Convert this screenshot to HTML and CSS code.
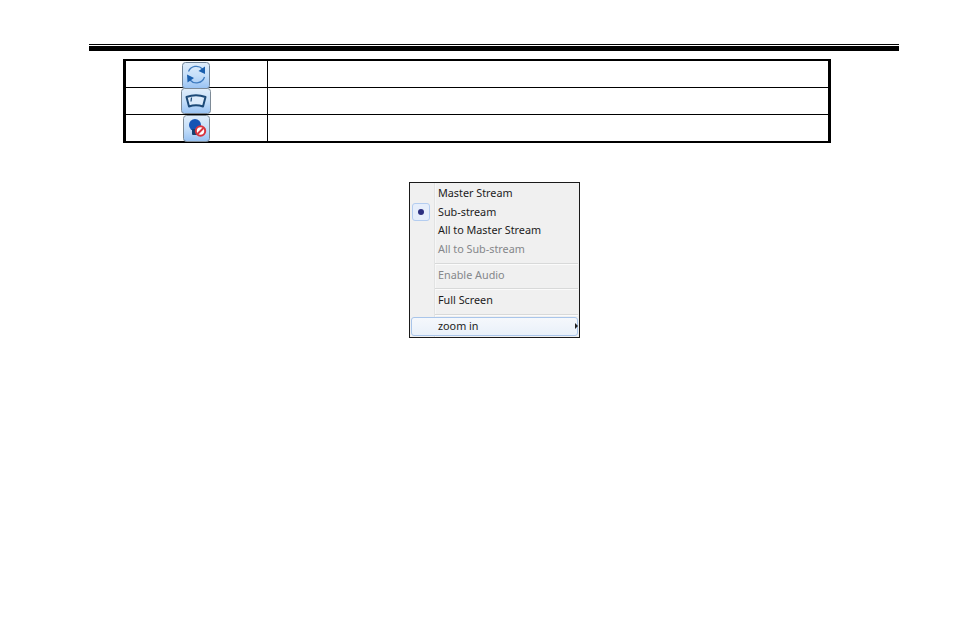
FILE: index.html
```html
<!DOCTYPE html>
<html lang="en">
<head>
    <meta charset="UTF-8">
    <title>Manual page</title>
    <link rel="stylesheet" href="styles.css">
</head>
<body>
    <div class="page">
        <div class="rule-thin"></div>
        <div class="rule-thick"></div>

        <table class="icon-table">
            <tr>
                <td class="icon-cell">
                    <svg class="tool-btn btn-a" viewBox="0 0 28 27">
                        <defs>
                            <linearGradient id="btnBg" x1="0" y1="0" x2="0" y2="1">
                                <stop offset="0" stop-color="#dfedfb"/>
                                <stop offset="0.5" stop-color="#c6dff9"/>
                                <stop offset="1" stop-color="#98c2f3"/>
                            </linearGradient>
                        </defs>
                        <rect x="0.5" y="0.5" width="27" height="26" rx="3" fill="url(#btnBg)" stroke="#6f8296"/>
                        <path d="M6.500 9.500a8.500 8.500 0 0 1 14-2.500" fill="none" stroke="#3f7cc0" stroke-width="1.300"/>
                        <path d="M23 4.500l0 7.500-6.500-3z" fill="#1a5fae"/>
                        <path d="M22.500 15a8.500 8.500 0 0 1-14.500 3" fill="none" stroke="#3f7cc0" stroke-width="1.300"/>
                        <path d="M5.500 20.500l-0.500-8 7 3.500z" fill="#1a5fae"/>
                    </svg>
                </td>
                <td></td>
            </tr>
            <tr>
                <td class="icon-cell">
                    <svg class="tool-btn btn-b" viewBox="0 0 30 26">
                        <rect x="0.5" y="0.5" width="29" height="25" rx="3" fill="url(#btnBg)" stroke="#7d8a96"/>
                        <path d="M5.500 9q9.500-3.500 19 0l-2.500 9.500q-7-2.500-14 0z" fill="#dcebfb" stroke="#1c4a78" stroke-width="2" stroke-linejoin="round"/>
                        <path d="M10.500 9.500l-0.500 4" stroke="#1c4a78" stroke-width="1.200"/>
                    </svg>
                </td>
                <td></td>
            </tr>
            <tr>
                <td class="icon-cell">
                    <svg class="tool-btn btn-c" viewBox="0 0 27 27">
                        <rect x="0.5" y="0.5" width="26" height="26" rx="3" fill="url(#btnBg)" stroke="#7d8a96"/>
                        <circle cx="12" cy="10" r="6" fill="#1554b4"/>
                        <rect x="9" y="14" width="6" height="6" rx="1" fill="#17406f"/>
                        <circle cx="17.500" cy="16" r="4.700" fill="#fff" stroke="#d8343f" stroke-width="2"/>
                        <path d="M14.500 19l6-6" stroke="#d8343f" stroke-width="2"/>
                    </svg>
                </td>
                <td></td>
            </tr>
        </table>

        <div class="context-menu">
            <div class="menu-item">Master Stream</div>
            <div class="menu-item checked">
                <span class="check-box"><span class="check-dot"></span></span>
                Sub-stream
            </div>
            <div class="menu-item">All to Master Stream</div>
            <div class="menu-item disabled">All to Sub-stream</div>
            <div class="menu-sep"></div>
            <div class="menu-item disabled">Enable Audio</div>
            <div class="menu-sep"></div>
            <div class="menu-item">Full Screen</div>
            <div class="menu-sep"></div>
            <div class="menu-item hover">
                zoom in
                <span class="submenu-arrow"></span>
            </div>
        </div>
    </div>
</body>
</html>
```

FILE: styles.css
```css
body {
    margin: 0;
    background: white;
    font-family: 'Noto Sans', 'Liberation Sans', sans-serif;
}

.page {
    padding: 44px 56px 0 89px;
}

.rule-thin {
    width: 810px;
    height: 1px;
    background: black;
}

.rule-thick {
    width: 810px;
    height: 5px;
    margin-top: 1px;
    background: black;
}

.icon-table {
    box-sizing: border-box;
    width: 708px;
    height: 84px;
    margin: 8px 0 0 34px;
    border-collapse: separate;
    border-spacing: 0;
    border-style: solid;
    border-color: black;
    border-width: 2px 3px;
    table-layout: fixed;
}

.icon-table td {
    height: 26px;
    padding: 0;
    border-bottom: 1px solid black;
}

.icon-table tr:last-child td {
    border-bottom: none;
}

.icon-cell {
    width: 141px;
    border-right: 1px solid black;
    text-align: center;
    line-height: 0;
}

.tool-btn {
    display: block;
}

.btn-a {
    width: 28px;
    height: 27px;
    margin: 1px 0 -2px 56px;
}

.btn-b {
    width: 30px;
    height: 26px;
    margin: 0 0 0 55px;
}

.btn-c {
    width: 27px;
    height: 27px;
    margin: 0 0 -1px 57px;
}

.context-menu {
    box-sizing: border-box;
    width: 171px;
    height: 156px;
    margin: 39px 0 0 320px;
    padding: 1px 1px;
    background: linear-gradient(to right, #f0f0f0 24px, #e2e3e3 24px, #e2e3e3 25px, #f7f7f7 25px, #f7f7f7 26px, #f0f0f0 26px);
    border: 1px solid #1a1a1a;
}

.menu-item {
    position: relative;
    box-sizing: border-box;
    height: 18.700px;
    padding-left: 27px;
    font-size: 10.800px;
    line-height: 18px;
    color: #1c1c1c;
    white-space: nowrap;
}

.disabled {
    color: #85878a;
}

.check-box {
    position: absolute;
    left: 1px;
    top: 0;
    box-sizing: border-box;
    width: 18px;
    height: 18px;
    background: #e6eefb;
    border: 1px solid #b4cdf0;
    border-radius: 3px;
    display: flex;
    align-items: center;
    justify-content: center;
}

.check-dot {
    width: 6px;
    height: 6px;
    border-radius: 50%;
    background: #2c2f80;
}

.menu-sep {
    height: 1px;
    margin: 4px 0 1px 24px;
    background: #d8d9d9;
    border-bottom: 1px solid #fbfbfb;
}

.hover {
    height: 19px;
    line-height: 16px;
    border: 1px solid #a9c5ea;
    border-radius: 3px;
    background: linear-gradient(to bottom, #f5f8fc, #e9f0f9);
    padding-left: 26px;
}

.submenu-arrow {
    position: absolute;
    right: -1px;
    top: 5px;
    border-left: 3px solid #222;
    border-top: 3px solid transparent;
    border-bottom: 3px solid transparent;
}
```
